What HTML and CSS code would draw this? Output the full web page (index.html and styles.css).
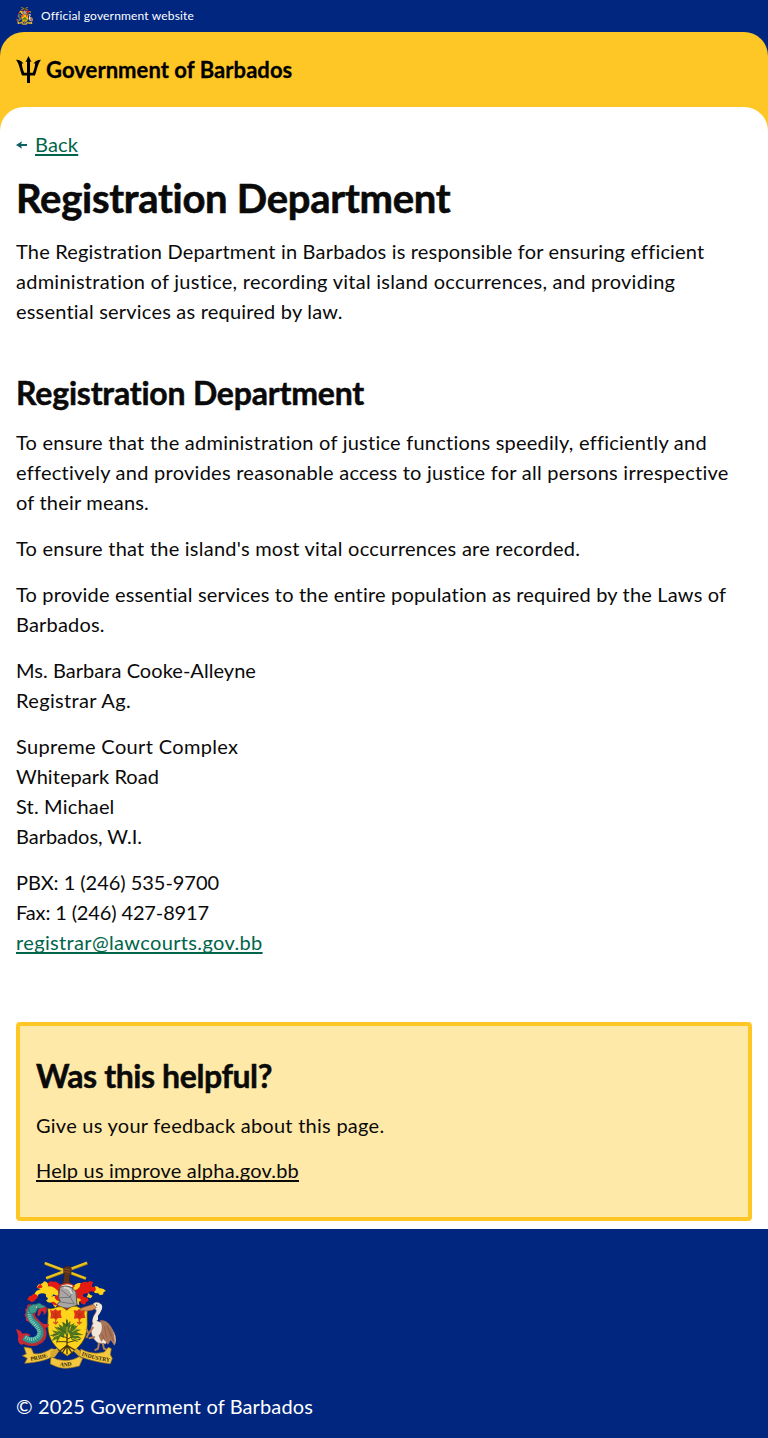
FILE: index.html
```html
<!DOCTYPE html>
<html lang="en">
<head>
<meta charset="utf-8">
<title>Registration Department</title>
<link rel="stylesheet" href="styles.css">
</head>
<body>
<div class="official">
  <svg class="crest-small" viewBox="18 18 300 324" preserveAspectRatio="none" aria-hidden="true"><use href="#crest"/></svg>
  <span class="official-text">Official government website</span>
</div>
<header class="header">
  <div class="brand">
    <svg class="trident" viewBox="0 0 25 27" aria-hidden="true">
      <path d="M12.5 0L15.5 6L14 5.6V16.8H16.8C18 14 18.9 11 19.2 7.3L17.5 7.8C19 5 21.5 4 25 3.8C21.4 8.5 20.9 15 18.9 19.6H14V27H11V19.6H6.1C4.1 15 3.6 8.5 0 3.8C3.5 4 6 5 7.5 7.8L5.8 7.3C6.1 11 7 14 8.2 16.8H11V5.6L9.5 6Z"/>
    </svg>
    <span class="brand-name">Government of Barbados</span>
  </div>
</header>
<div class="page">
<main class="main">
  <a class="back" href="#"><svg class="arrow" viewBox="0 0 12 8" aria-hidden="true"><path d="M0 4L6 .3L5.2 3H11V5H5.2L6 7.7Z"/></svg><span class="link">Back</span></a>
  <h1 class="title">Registration Department</h1>
  <p class="intro"><span class="snug">The Registration Department in Barbados is responsible for ensuring efficient</span><br><span class="open">administration of justice, recording vital island occurrences, and providing</span><br>essential services as required by law.</p>
  <h2 class="subtitle">Registration Department</h2>
  <p><span class="even">To ensure that the administration of justice functions speedily, efficiently and</span><br><span class="open">effectively and provides reasonable access to justice for all persons irrespective</span><br>of their means.</p>
  <p><span class="even">To ensure that the island's most vital occurrences are recorded.</span></p>
  <p><span class="snug">To provide essential services to the entire population as required by the Laws of<br>Barbados.</span></p>
  <p><span class="close">Ms. Barbara Cooke-Alleyne</span><br><span class="wide">Registrar Ag.</span></p>
  <p><span class="wide">Supreme Court Complex</span><br><span class="close">Whitepark Road</span><br><span class="snug">St. Michael</span><br><span class="flat">Barbados, W.I.</span></p>
  <p><span class="flat">PBX: 1 (246) 535-9700</span><br><span class="tight">Fax: 1 (246) 427-8917</span><br><a class="link wide" href="#">registrar@lawcourts.gov.bb</a></p>
  <section class="feedback">
    <h2 class="feedback-title">Was this helpful?</h2>
    <p class="open">Give us your feedback about this page.</p>
    <a class="feedback-link" href="#">Help us improve alpha.gov.bb</a>
  </section>
</main>
</div>
<footer class="footer">
  <svg class="crest-large" viewBox="18 18 300 324" role="img" aria-label="Coat of arms of Barbados">
    <g id="crest" stroke-linejoin="round">
      <g fill="none" stroke="#a88518" stroke-width="9"><path d="M105 25L228 71M232 24L109 70"/></g>
      <g fill="none" stroke="#eac51e" stroke-width="6"><path d="M104 24L227 70M231 23L108 69"/></g>
      <path d="M161 43L164 35L176 33L184 40L183 56L178 63L180 90H158L162 63Z" fill="#5c301b" stroke="#33200f" stroke-width="2"/>
      <path d="M162 42L182 45M162 50L182 52" stroke="#965a2c" stroke-width="2"/>
      <!-- mantling, left -->
      <path d="M154 96Q143 78 130 80Q114 76 113 90L132 104L146 122Z" fill="#e41b13"/>
      <path d="M144 108Q130 92 114 94Q116 80 102 79Q100 86 92 87Q82 88 80 98L92 103Q78 106 74 116Q66 122 68 132Q82 128 86 118Q98 112 108 118Q106 130 116 128Q126 128 130 118Q138 120 146 128Z" fill="#ffd319"/>
      <path d="M80 98Q86 90 92 87L98 96Q90 102 80 98ZM78 118Q68 114 64 122Q54 122 52 136Q60 134 63 141Q72 142 76 134Q84 130 84 124Z" fill="#e41b13"/>
      <path d="M110 120Q120 128 132 122L148 134V150Q138 148 138 158Q126 150 128 142Q112 146 108 136Q118 134 110 120Z" fill="#ffd319"/>
      <path d="M136 122L147 120V139Q138 136 134 128ZM124 142Q130 154 144 150L132 140Z" fill="#e41b13"/>
      <!-- mantling, right -->
      <path d="M188 98Q196 82 212 84Q218 100 202 108L196 118Z" fill="#ffd319"/>
      <path d="M194 106Q212 100 210 88Q220 76 232 82Q240 76 250 82Q244 88 246 96Q258 94 266 102Q262 110 254 112Q240 104 234 116Q222 112 218 122Q208 126 198 120Z" fill="#e41b13"/>
      <path d="M254 94Q264 92 268 100Q280 98 288 108Q278 110 280 118Q268 124 264 114Q254 116 252 110Q262 106 254 94ZM236 114Q240 122 248 122L242 130L230 126Z" fill="#ffd319"/>
      <path d="M198 120Q216 116 222 126Q236 126 236 138Q228 138 226 148Q214 150 210 138L200 142Z" fill="#e41b13"/>
      <path d="M200 130Q210 128 214 136Q204 138 208 150L200 148Z" fill="#ffd319"/>
      <!-- helmet -->
      <path d="M148 94C158 84 184 83 192 94L184 100H156Z" fill="#fff0d0" stroke="#c22b20" stroke-width="4"/>
      <path d="M149 98C165 88 190 94 198 112L201 149C181 164 154 162 141 148L151 139L146 128Z" fill="#aaa7a5" stroke="#565554" stroke-width="3"/>
      <path d="M152 103L181 127L148 128M181 127L193 147L151 141M181 127L188 102" fill="none" stroke="#777" stroke-width="3"/>
      <path d="M161 98C173 96 182 104 186 117" fill="none" stroke="#ded9d4" stroke-width="5"/>
      <path d="M141 149C159 163 187 163 202 149L195 168H150Z" fill="#b32619"/>
      <!-- shield -->
      <path d="M113 160C127 165 137 154 151 155C162 156 166 164 171 166C182 152 197 151 208 158C219 164 226 159 234 160C228 182 235 202 230 228C224 266 197 283 172 303C146 286 120 264 115 229C110 201 117 184 113 160Z" fill="#ffd41b" stroke="#60520e" stroke-width="2"/>
      <g id="bloom">
        <path d="M120 165L130 167L136 162L143 167L154 165L152 176L155 189L144 189L138 196L131 190L121 191L123 178Z" fill="#e13319"/>
        <path d="M127 173L146 188M148 172L128 188M137 169V190" stroke="#a9340e" stroke-width="2"/>
        <path d="M137 195V206M130 201L137 207L144 200" fill="none" stroke="#d0561b" stroke-width="4"/>
      </g>
      <use href="#bloom" x="71"/>
      <path d="M171 194V278M171 271L145 292M171 271L155 297M171 271V298M171 271L187 296M171 271L199 288" fill="none" stroke="#4b3512" stroke-width="4"/>
      <path d="M171 248L130 237M171 253L205 236M171 235L142 216M171 228L196 211M171 260L139 260M171 263L211 253M171 213L157 203" fill="none" stroke="#4a4913" stroke-width="3"/>
      <path d="M169 190L174 205L181 197L181 211L193 204L190 215L205 211L195 223L214 224L199 231L221 240L202 241L216 251L198 249L204 262L185 254L181 244L176 231L172 244L164 235L161 249L151 243L140 267L140 252L124 258L133 246L119 241L137 236L125 226L145 230L132 214L150 221L146 207L159 215L158 200L168 208Z" fill="#31651f" opacity=".85"/>
      <path d="M138 222L151 229M132 245L149 239M144 259L151 248M183 214L178 226M205 219L187 230M212 241L190 242M186 249L205 258M171 215V237" stroke="#d0bd24" stroke-width="3"/>
      <!-- dolphin -->
      <path d="M62 148Q48 148 52 158Q42 162 48 172Q40 180 48 188Q44 198 56 200L72 212L76 170ZM90 200Q98 208 116 207Q118 216 104 219Q110 228 98 230L84 218ZM18 222Q32 226 37 236Q52 232 62 240Q52 248 44 247L52 262L34 270Q20 262 25 244Z" fill="#cf2733"/>
      <path d="M40 250Q58 266 80 258C105 248 100 226 84 210C66 192 54 182 70 162" fill="none" stroke="#b92c34" stroke-width="25"/>
      <path d="M42 247Q62 262 80 252C97 241 94 224 78 208C62 194 50 180 66 158" fill="none" stroke="#2f9189" stroke-width="19"/>
      <path d="M46 246Q64 258 77 249C93 239 90 224 75 209C60 194 51 181 67 160" fill="none" stroke="#87cfc0" stroke-width="10" stroke-dasharray="3 3"/>
      <path d="M56 158Q64 146 78 148Q88 140 96 150L106 153L99 162L84 160L76 173L60 176Z" fill="#3b9d8b" stroke="#27645c" stroke-width="2"/>
      <path d="M84 164Q94 158 104 157Q112 152 110 162Q112 174 100 180Q104 170 94 168Q92 184 82 184Z" fill="#cf2733"/>
      <circle cx="79" cy="156" r="3" fill="#fff3d0" stroke="#222"/>
      <!-- pelican -->
      <path d="M249 147C257 138 272 142 273 152C277 170 258 176 257 193C263 205 291 200 304 219C318 239 322 258 313 270L302 251L286 267L265 264C244 252 238 222 249 205C244 182 262 174 258 164L247 158Z" fill="#f1e8dc" stroke="#98715c" stroke-width="2"/>
      <path d="M262 144Q280 144 276 162Q271 174 264 182V194L248 204Q246 184 262 174Z" fill="#f1e8dc"/>
      <path d="M270 196C300 192 318 232 314 272L302 256L294 269L281 251L274 261L266 242L260 248C276 236 280 216 270 196Z" fill="#aa7559"/>
      <path d="M283 214L290 247M291 212L303 244M298 222L310 258M276 237L284 256" stroke="#946047" stroke-width="3"/>
      <path d="M250 148L217 158L207 164L229 168L248 165L259 158Z" fill="#d69153" stroke="#975c35" stroke-width="2"/>
      <circle cx="260" cy="150" r="2" fill="#222"/>
      <path d="M250 216L236 236L229 222M236 235L229 249M255 246L236 250M267 264L264 281L254 286M278 264L282 281L292 285" fill="none" stroke="#b67c52" stroke-width="6"/>
      <!-- ribbon -->
      <path d="M42 276L64 280L71 296C93 299 108 290 124 281L135 283L124 306C105 318 75 322 44 325L52 310L37 302L49 297Z" fill="#f3c83f" stroke="#9f741d" stroke-width="2"/>
      <path d="M213 282C232 294 260 298 283 291L295 277L304 281L301 299L307 310L301 326C276 324 233 315 208 304Z" fill="#f3c83f" stroke="#9f741d" stroke-width="2"/>
      <path d="M123 305L141 313C163 319 185 318 207 305L218 310L208 333C184 339 164 343 140 335L121 327Z" fill="#f3c83f" stroke="#9f741d" stroke-width="2"/>
      <path d="M121 289L141 280L147 289L134 307L121 305ZM212 289L200 280L191 289L208 305Z" fill="#d6a72c"/>
      <path id="ribbon-left" d="M62 317Q96 314 124 300" fill="none"/>
      <path id="ribbon-mid" d="M149 333Q173 337 201 328" fill="none"/>
      <path id="ribbon-right" d="M214 301Q254 316 306 321" fill="none"/>
      <g class="motto"><text><textPath href="#ribbon-left">PRIDE</textPath></text><text><textPath href="#ribbon-mid">AND</textPath></text><text><textPath href="#ribbon-right">INDUSTRY</textPath></text></g>
    </g>
  </svg>
  <p class="copyright">© 2025 Government of Barbados</p>
</footer>
</body>
</html>
```
FILE: styles.css
```css
* { box-sizing: border-box; }
body { margin: 0; background: #00267f; color: #0a0a0a; font-family: Lato, "Noto Sans", sans-serif; font-size: 20px; line-height: 30px; letter-spacing: .2px; font-variant-ligatures: none; }
p, h1, h2 { margin: 0; }

.tight { letter-spacing: -.137px; }
.flat { letter-spacing: -.035px; }
.close { letter-spacing: .048px; }
.snug { letter-spacing: .178px; }
.even { letter-spacing: .236px; }
.open { letter-spacing: .261px; }
.wide { letter-spacing: .35px; }

.official { height: 32px; padding: 0 16px; display: flex; align-items: center; gap: 8px; color: #fff; font-size: 12px; line-height: 18px; letter-spacing: .164px; }
.crest-small { width: 17px; height: 18px; }
.header { height: 99px; padding: 24px 16px; background: #ffc726; border-radius: 24px 24px 0 0; }
.brand { display: flex; align-items: center; gap: 5px; height: 27px; color: #000; font-size: 22px; font-weight: 700; letter-spacing: .06px; -webkit-text-stroke: .3px; }
.trident { width: 25px; height: 27px; }

.page { margin-top: -24px; background: #ffc726; border-radius: 24px 24px 0 0; }
.main { height: 1122px; padding: 22px 16px 8px; background: #fff; border-radius: 24px 24px 0 0; display: flex; flex-direction: column; }
.main > p + p { margin-top: 16px; }
.back { display: flex; align-items: center; gap: 7px; height: 30px; color: #00654a; text-decoration: none; }
.arrow { width: 12px; height: 8px; margin-top: 2px; fill: #0e5f64; }
.link { color: #00654a; text-decoration: underline; text-decoration-thickness: 2px; text-underline-offset: 2px; text-decoration-skip-ink: none; }
.title { margin-top: 16px; height: 46px; font-size: 40px; line-height: 46px; font-weight: 700; letter-spacing: -.28px; -webkit-text-stroke: .6px; }
.intro { margin-top: 15px; }
.subtitle { margin: 47px 0 14px; font-size: 32px; line-height: 40px; letter-spacing: -.203px; -webkit-text-stroke: .5px; }

.feedback { margin-top: 65px; height: 199px; padding: 30px 16px 0; background: #ffe9a8; border: 4px solid #ffc726; border-radius: 4px; }
.feedback-title { margin-bottom: 14px; font-size: 32px; line-height: 40px; letter-spacing: -.402px; -webkit-text-stroke: .5px; }
.feedback-link { display: inline-block; margin-top: 15px; color: #0a0a0a; text-decoration: underline; text-decoration-thickness: 2px; text-underline-offset: 2px; text-decoration-skip-ink: none; }

.footer { height: 209px; padding: 32px 16px 16px; color: #fff; }
.crest-large { display: block; width: 100px; height: 108px; margin-bottom: 22px; }
.motto { font: 700 17px "Liberation Serif", serif; letter-spacing: 0; fill: #33270b; }
.copyright { letter-spacing: .124px; }
```
